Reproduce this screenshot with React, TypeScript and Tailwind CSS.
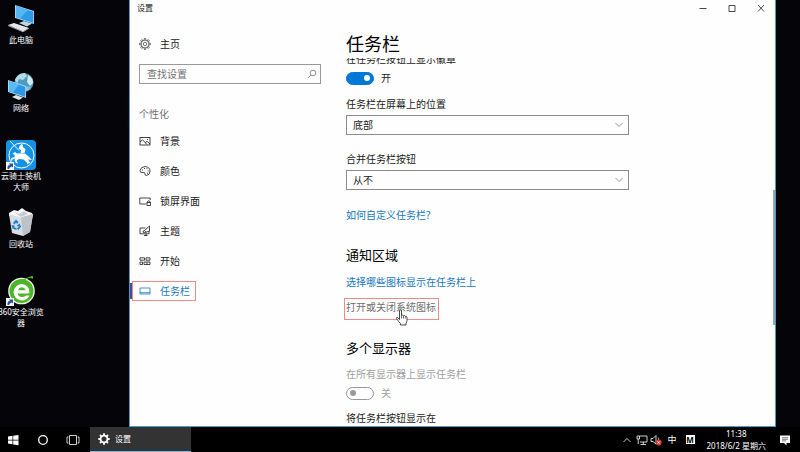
import { useState } from "react";
import type { ReactNode } from "react";

const stroke = {
  fill: "none",
  stroke: "currentColor",
  strokeWidth: 0.8,
};

function ShortcutArrow() {
  return (
    <g>
      <rect x="0" y="22" width="8" height="8" fill="#f4f6fa" />
      <path d="M1.500 29V27Q1.500 25 4 25L3 23.500H7V27.500L5.700 26.500Q3.500 27 3 29Z" fill="#2b4f9a" />
    </g>
  );
}

function ComputerIcon() {
  return (
    <svg viewBox="0 0 30 30" className="size-[30px]">
      <path d="M9 1L28 7V20L9 14Z" fill="#9fd4f2" />
      <path d="M10 2.200L27.200 7.700V18.800L10 13.200Z" fill="#2e9be6" />
      <path d="M10 2.200L22 6L14 14.500L10 13.200Z" fill="#55b6f2" />
      <path d="M13 19L18 17L26 19.500L21 22.500Z" fill="#b9d8e8" />
      <path d="M2 21L8 19L23 24L17 27.500Z" fill="#e6e6ea" />
      <path d="M2 21V22L17 28.300L23 24.800V24L17 27.200Z" fill="#a8a9b2" />
    </svg>
  );
}

function NetworkIcon() {
  return (
    <svg viewBox="0 0 30 30" className="size-[30px]">
      <circle cx="18" cy="10.500" r="9.500" fill="#4c9cc0" />
      <path d="M9 8Q12 1 19 1L21 4L17 8L13 7L11 11Z" fill="#b7dbe6" />
      <path d="M22 3Q27 6 27 11L24 14L21 10Z" fill="#d6ebef" />
      <path d="M19 14L25 15Q22 20 17 19.500Z" fill="#85c3d8" />
      <path d="M2 8L20 14V26L2 20Z" fill="#a4d8f4" />
      <path d="M3 9.300L19.200 14.700V24.700L3 19.200Z" fill="#2e97e3" />
      <path d="M3 9.300L13 12.600L7 20.500L3 19.200Z" fill="#5bb9f3" />
      <path d="M6 25L10 23L17 25.500L13 28Z" fill="#dfe6ec" />
    </svg>
  );
}

function KnightIcon() {
  return (
    <svg viewBox="0 0 30 30" className="size-[30px]">
      <rect width="30" height="30" rx="4" fill="#1492e6" />
      <circle cx="15.500" cy="15.500" r="12.500" fill="none" stroke="#fff" strokeWidth="1" />
      <path d="M4 1L13 10.500M20 18L24 23" stroke="#fff" strokeWidth="0.9" />
      {/* rider */}
      <path d="M14 5.500L15.500 4L17 5L16.800 7L19.500 9L18.500 13L14.500 13.500L15 10L12.500 8.500Z" fill="#fff" />
      {/* horse */}
      <path d="M6.500 13.500L9 12L11 13.500L19 13.500L22 16L26 20L22 19.500L23.500 22.500L21.500 24.500L20.500 22L17.500 19.500L13 19L10.500 20.500L12 23.500L10 23L8.500 20L9.500 18.500L6.500 19.500L5.500 22L5 18.500L9 16.500L8.500 15Z" fill="#fff" />
      <ShortcutArrow />
    </svg>
  );
}

function RecycleIcon() {
  return (
    <svg viewBox="0 0 30 30" className="size-[30px]">
      <path d="M3 5L8 2L12 3L16 0L20 3L26 5L27 8L15 11L3 8Z" fill="#f6f7f8" />
      <path d="M3 6L15 9.500L27 6L24 24L17 28L6 25Z" fill="#d9dde1" />
      <path d="M15 9.500L27 6L24 24L17 28Z" fill="#bcc2c8" />
      <path d="M8 4L13 6L18 3L22 6L15 9Z" fill="#c8cdd2" />
      <path d="M7 15L10 11.500L12.500 14L11 16L10 14.500L8.500 16.500Z M5.500 17L8.500 17.500L8.500 19.500L10.500 20V22L6.500 20.500Z M10.500 18L13.500 15.500L15 18.500L12.500 22L11 20.500L13 18.500Z" fill="#1780d2" />
    </svg>
  );
}

function BrowserIcon() {
  return (
    <svg viewBox="0 0 30 30" className="size-[30px]">
      <circle cx="15.500" cy="15" r="13.300" fill="#f3faee" />
      <circle cx="15.500" cy="15" r="12" fill="#4db526" />
      <path d="M22 17.500H11.500Q12.500 21 16 21Q18.500 21 20 19.500H23.500Q21 24.500 15.800 24.500Q8 23.500 7.500 16Q9 8 16 8Q23.500 9 23.500 16.500Z" fill="#fff" />
      <path d="M12 14.200H19.500Q18.500 11.300 15.800 11.300Q13 11.500 12 14.200Z" fill="#4db526" />
      <path d="M4 18Q10 4 26 0Q28 0 26.500 3Q24 0 16 6Q8 11 4 18Z" fill="#52b52b" />
      <ShortcutArrow />
    </svg>
  );
}

const desktopItems = [
  { lines: ["此电脑"], icon: <ComputerIcon /> },
  { lines: ["网络"], icon: <NetworkIcon /> },
  { lines: ["云骑士装机", "大师"], icon: <KnightIcon /> },
  { lines: ["回收站"], icon: <RecycleIcon /> },
  { lines: ["360安全浏览", "器"], icon: <BrowserIcon /> },
];

function NavIcon({ children }: { children: ReactNode }) {
  return (
    <svg viewBox="0 0 12 12" className="size-3 shrink-0" {...stroke}>
      {children}
    </svg>
  );
}

const navItems = [
  {
    name: "背景",
    icon: (
      <NavIcon>
        <rect x="1" y="2.500" width="10" height="7.500" />
        <path d="M1 7L3.500 4.800L8 9.500M6.300 7.800L8 6.300L11 9" />
        <path d="M8 4.500H9" />
      </NavIcon>
    ),
  },
  {
    name: "颜色",
    icon: (
      <NavIcon>
        <path d="M4 7.500Q1 8 1 5.500Q1.500 2 6 1.500Q11 2 11 6Q11 10 7.500 10.500Q5.500 10.500 6 8.800Q6 7.200 4 7.500Z" />
        <path d="M3 5H4M5 3.500H6M7.500 3.800H8.500M8.700 6H9.700M8 8.200H9" />
      </NavIcon>
    ),
  },
  {
    name: "锁屏界面",
    icon: (
      <NavIcon>
        <path d="M7 9H0.800V3H11.200V5" />
        <rect x="8" y="7.500" width="3.500" height="3" />
        <path d="M8.700 7.500V6.300Q9.800 5.200 10.800 6.300V7.500" />
      </NavIcon>
    ),
  },
  {
    name: "主题",
    icon: (
      <NavIcon>
        <path d="M6.500 3H1V8.800H10V6" />
        <path d="M4 7.200Q4 5.500 5.500 5.500L10.500 1V6L7 7.200Q6 8 4 7.200ZM5.500 5.500L7 7.200M5 10.500H8.500M7 8.800V10.500" />
      </NavIcon>
    ),
  },
  {
    name: "开始",
    icon: (
      <NavIcon>
        <path d="M1 2.800H5.500V5.200H1ZM7 2.800H11V5.200H7ZM1 7H3.500V9.500H1ZM5 7H11V9.500H5ZM8 7V9.500" />
      </NavIcon>
    ),
  },
  {
    name: "任务栏",
    icon: (
      <NavIcon>
        <path d="M1 3H11V9H1ZM1 7.700H11" />
      </NavIcon>
    ),
  },
];

const teeth = [0, 45, 90, 135, 180, 225, 270, 315];

function GearIcon() {
  return (
    <svg viewBox="0 0 12 12" className="size-3 shrink-0" fill="none" stroke="currentColor" strokeWidth="0.6">
      <circle cx="6" cy="6" r="3.900" />
      <circle cx="6" cy="6" r="1.700" />
      {teeth.map((deg) => (
        <path key={deg} d="M5.100 2.200L5.200 0.600H6.800L6.900 2.200" transform={`rotate(${deg} 6 6)`} />
      ))}
    </svg>
  );
}

function SolidGearIcon() {
  return (
    <svg viewBox="0 0 12 12" className="size-3 shrink-0" fill="none" stroke="currentColor">
      <circle cx="6" cy="6" r="3.400" strokeWidth="1.800" />
      {teeth.map((deg) => (
        <path key={deg} d="M6 2.200V0.300" strokeWidth="1.900" transform={`rotate(${deg} 6 6)`} />
      ))}
    </svg>
  );
}

function Dropdown({ id, label, options }: { id: string; label: string; options: string[] }) {
  return (
    <div>
      <label htmlFor={id} className="block">
        {label}
      </label>
      <div className="relative mt-[3px]">
        <select
          id={id}
          className="block h-5 w-full appearance-none border border-[#8c8c8c] bg-transparent px-[6px] leading-4 outline-none"
        >
          {options.map((o) => (
            <option key={o}>{o}</option>
          ))}
        </select>
        <svg viewBox="0 0 10 6" className="pointer-events-none absolute top-[7px] right-[5px] h-[6px] w-[10px] text-[#777]" {...stroke}>
          <path d="M1.500 1L5 4.500L8.500 1" />
        </svg>
      </div>
    </div>
  );
}

function Toggle({ label, on, disabled }: { label: string; on: boolean; disabled?: boolean }) {
  const [checked, setChecked] = useState(on);

  return (
    <label className={`block ${disabled ? "text-[#a0a0a0]" : ""}`}>
      {label}
      <span className="mt-[5px] flex h-3 items-center gap-[7px]">
        <input
          type="checkbox"
          role="switch"
          checked={checked}
          disabled={disabled}
          onChange={(e) => setChecked(e.target.checked)}
          className="flex h-[13px] w-7 appearance-none items-center rounded-full border border-[#999] px-[3px] before:size-[6px] before:rounded-full before:bg-[#999] checked:justify-end checked:border-[#0078d7] checked:bg-[#0078d7] checked:before:bg-white"
        />
        <span>{checked ? "开" : "关"}</span>
      </span>
    </label>
  );
}

function HandCursor() {
  return (
    <svg viewBox="0 0 14 17" className="pointer-events-none absolute top-[10px] left-[50px] h-[17px] w-[14px]">
      <path
        d="M4.500 10.500V2Q4.500 0.800 5.500 0.800T6.500 2V6.500Q7.500 5.500 8.500 6.800Q9.600 6 10.300 7.300Q12 6.800 12 8.500V11.500Q12 13 11 14V16H5.500V14.500Q4 13 1.500 9.500Q1.300 8.300 2.500 8.300Z"
        fill="#fff"
        stroke="#333"
        strokeWidth="0.9"
      />
      <path d="M6.500 6.500V9.500M8.500 7V9.500M10.300 7.500V9.500" stroke="#333" strokeWidth="0.7" />
    </svg>
  );
}

function Sidebar() {
  const [active, setActive] = useState("任务栏");

  return (
    <aside className="w-[200px] shrink-0 pt-5">
      <a href="#home" className="flex h-4 items-center gap-[9px] pl-[9px]">
        <GearIcon />
        主页
      </a>

      <div className="relative mt-3 ml-[9px] w-[182px]">
        <input
          type="search"
          aria-label="查找设置"
          placeholder="查找设置"
          className="block h-5 w-full border border-[#999] px-[7px] outline-none placeholder:text-[#707070]"
        />
        <svg viewBox="0 0 10 10" className="absolute top-[5px] right-1 size-[10px] text-[#777]" {...stroke}>
          <circle cx="6" cy="4" r="2.800" />
          <path d="M4 6L1 9" />
        </svg>
      </div>

      <h2 className="mt-[22px] pl-[9px] text-[#707070]">个性化</h2>

      <nav className="mt-1">
        {navItems.map((item) => (
          <a
            key={item.name}
            href="#settings"
            onClick={() => setActive(item.name)}
            className={`flex h-[30px] items-center ${active === item.name ? "text-[#1778bd]" : ""}`}
          >
            <span className={`h-4 w-[2px] ${active === item.name ? "bg-[#3c519c]" : ""}`} />
            <span
              className={`flex h-5 items-center gap-[9px] border pr-[5px] pl-[6px] ${
                active === item.name ? "border-[#f08a8a]" : "border-transparent"
              }`}
            >
              {item.icon}
              {item.name}
            </span>
          </a>
        ))}
      </nav>
    </aside>
  );
}

function SettingsWindow() {
  return (
    <section className="mr-6 flex min-w-0 flex-1 flex-col border-r border-b border-l border-[#4a9acb] bg-[#fefefe] text-[10px] leading-4 text-[#1a1a1a]">
      {/* title bar */}
      <header className="flex h-4 shrink-0 items-center pl-[7px] text-[8px]">
        <span className="flex-1">设置</span>
        <button aria-label="最小化" className="flex h-4 w-[29px] items-center justify-center">
          <svg viewBox="0 0 8 8" className="size-2" {...stroke}><path d="M0.500 4.500H7.500" /></svg>
        </button>
        <button aria-label="最大化" className="flex h-4 w-[29px] items-center justify-center">
          <svg viewBox="0 0 8 8" className="size-2" {...stroke}><path d="M1 1.500H7V7.500H1Z" /></svg>
        </button>
        <button aria-label="关闭" className="flex h-4 w-[29px] items-center justify-center">
          <svg viewBox="0 0 8 8" className="size-2" {...stroke}><path d="M1 1L7 7.500M7 1L1 7.500" /></svg>
        </button>
      </header>

      <div className="flex min-h-0 flex-1">
        <Sidebar />

        <main className="relative flex min-w-0 flex-1 flex-col pl-3">
          <h1 className="mt-4 h-[26px] shrink-0 pl-1 text-[18px] leading-6 text-black">任务栏</h1>

          <div className="min-h-0 flex-1 overflow-hidden pl-1">
            <div className="-mt-[7px] mr-[146px]">
              <Toggle label="在任务栏按钮上显示徽章" on />

              <div className="mt-3 space-y-4">
                <Dropdown id="position" label="任务栏在屏幕上的位置" options={["底部", "顶部", "靠左", "靠右"]} />
                <Dropdown id="combine" label="合并任务栏按钮" options={["从不", "任务栏已满时", "始终合并按钮"]} />
              </div>

              <a href="#help" className="mt-[17px] block text-[#1778bd]">如何自定义任务栏?</a>

              <h2 className="mt-[22px] text-[13px] leading-5 text-black">通知区域</h2>
              <a href="#icons" className="mt-[9px] block text-[#1778bd]">选择哪些图标显示在任务栏上</a>
              <a
                href="#system-icons"
                className="relative mt-2 -ml-[2px] block h-[22px] w-[95px] border border-[#f08a8a] pl-px whitespace-nowrap text-[#707070]"
              >
                打开或关闭系统图标
                <HandCursor />
              </a>

              <h2 className="mt-[18px] mb-2 text-[13px] leading-5 text-black">多个显示器</h2>
              <Toggle label="在所有显示器上显示任务栏" on={false} disabled />
              <p className="mt-[11px]">将任务栏按钮显示在</p>
            </div>
          </div>

          {/* scroll thumb */}
          <span className="absolute top-[174px] right-0 h-[135px] w-[2px] bg-[#98a5ab]" />
        </main>
      </div>
    </section>
  );
}

function Taskbar() {
  return (
    <footer className="flex h-[25px] shrink-0 items-center bg-black text-[8px] text-white">
      <button aria-label="开始" className="flex w-[25px] justify-center">
        <svg viewBox="0 0 12 12" className="size-3" fill="currentColor">
          <path d="M1 2.500L5.500 1.800V5.700H1ZM6.200 1.700L11.500 1V5.700H6.200ZM1 6.400H5.500V10.300L1 9.600ZM6.200 6.400H11.500V11.200L6.200 10.400Z" />
        </svg>
      </button>
      <button aria-label="Cortana" className="ml-3 flex w-3 justify-center">
        <svg viewBox="0 0 12 12" className="size-3" fill="none" stroke="currentColor" strokeWidth="1.300">
          <circle cx="6" cy="6" r="4.300" />
        </svg>
      </button>
      <button aria-label="任务视图" className="ml-[17px] flex w-[14px] justify-center">
        <svg viewBox="0 0 14 12" className="h-3 w-[14px] shrink-0" {...stroke}>
          <path d="M3.500 1.500H10.500V10.500H3.500ZM2.500 3H1V9H2.500M11.500 3H13V9H11.500" />
        </svg>
      </button>
      <button className="ml-[10px] flex h-[25px] w-[101px] items-center gap-[5px] border-b border-[#76b9ed] bg-[#333] pl-2">
        <SolidGearIcon />
        设置
      </button>

      <div className="ml-auto flex h-[25px] items-center">
        <button aria-label="显示隐藏的图标">
          <svg viewBox="0 0 10 10" className="size-[10px]" {...stroke}><path d="M1.500 7L5 3.500L8.500 7" /></svg>
        </button>
        <svg viewBox="0 0 12 12" className="ml-1 size-3" {...stroke}>
          <path d="M3.500 2H11V8H4M7.300 8V10.500M4.500 10.500H10M1 2H3.500V5H1ZM2.200 5V10" />
        </svg>
        <svg viewBox="0 0 12 12" className="ml-[2px] size-3" {...stroke}>
          <path d="M1 4.500H3L6 1.500V10L3 7.500H1ZM8 3.500Q9 4.500 8.500 6" />
          <circle cx="8.700" cy="8.500" r="2.900" fill="#d83434" stroke="none" />
          <path d="M7.500 7.300L9.900 9.700M9.900 7.300L7.500 9.700" />
        </svg>
        <span className="ml-[5px] text-[9px]">中</span>
        <span className="ml-[9px] flex size-[9px] items-center justify-center bg-white text-[8px] leading-none font-bold text-black">M</span>
        <time className="ml-3 text-center leading-3">
          11:38
          <br />
          2018/6/2 星期六
        </time>
        <button aria-label="通知" className="mr-[9px] ml-[13px]">
          <svg viewBox="0 0 12 12" className="size-3">
            <path d="M1 1.500H11V9H7.500V11.500L5 9H1Z" fill="#fff" />
            <path d="M3 3.700H9M3 5.300H9M3 6.900H7" stroke="#444" strokeWidth="0.7" />
          </svg>
        </button>
      </div>
    </footer>
  );
}

export default function App() {
  return (
    <div className="flex h-screen flex-col overflow-hidden bg-[#050409] font-['Noto_Sans','Noto_Sans_CJK_SC',sans-serif]">
      <div className="flex min-h-0 flex-1">
        {/* desktop shortcuts */}
        <div className="w-[129px] shrink-0 overflow-hidden pt-1">
          {desktopItems.map((item) => (
            <button
              key={item.lines[0]}
              className="flex h-[68px] w-[42px] flex-col items-center text-[8px] leading-[11px] whitespace-nowrap text-white"
            >
              {item.icon}
              {item.lines.map((line) => (
                <span key={line}>{line}</span>
              ))}
            </button>
          ))}
        </div>

        <SettingsWindow />
      </div>

      <Taskbar />
    </div>
  );
}
